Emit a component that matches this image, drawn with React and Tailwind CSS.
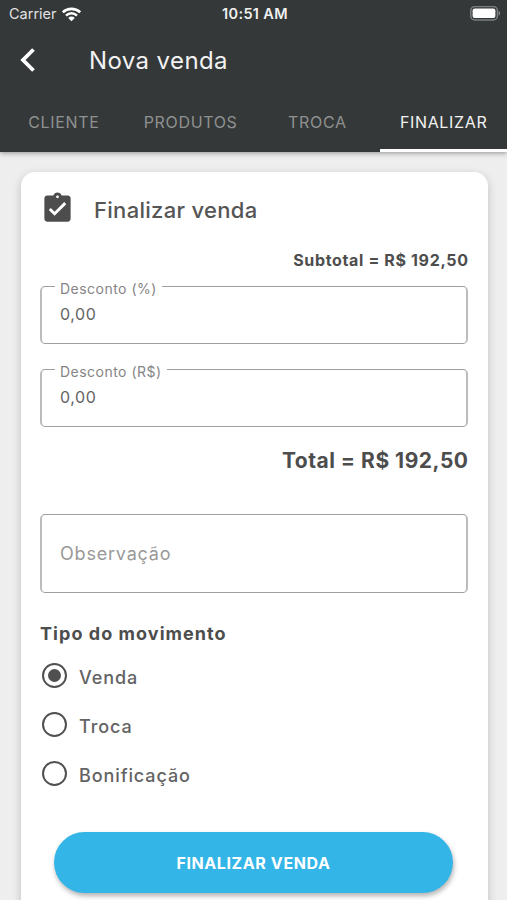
import React from "react";

function Wifi() {
  return (
    <svg width="19" height="15" viewBox="0 0 18 14" fill="none" stroke="#fff" strokeWidth="2.4">
      <path d="M.8 4.9C5.4.6 12.6.6 17.2 4.9" />
      <path d="M3.800 8C6.800 5.200 11.200 5.200 14.200 8" />
      <path d="M9 13.400 5.900 10.200C7.600 8.600 10.400 8.600 12.100 10.200Z" fill="#fff" stroke="none" />
    </svg>
  );
}

function Battery() {
  return (
    <svg width="31" height="15" viewBox="0 0 31 15">
      <rect x=".8" y=".6" width="26.6" height="13.3" rx="4" fill="none" stroke="#7b7e7e" strokeWidth="1.5" />
      <rect x="2.6" y="2.600" width="22.800" height="9.300" rx="2" fill="#fff" />
      <path d="M28.600 5v4.600c1-.4 1.600-1.200 1.600-2.300S29.600 5.400 28.600 5Z" fill="#858787" />
    </svg>
  );
}

function ClipboardCheck() {
  return (
    <svg className="mt-[19px] -ml-[0.5px] shrink-0" width="35" height="35" viewBox="0 0 24 24" fill="#4d4d4d">
      <path d="M19 3h-4.180C14.400 1.840 13.300 1 12 1s-2.400.840-2.820 2H5c-1.100 0-2 .900-2 2v14c0 1.100.900 2 2 2h14c1.100 0 2-.900 2-2V5c0-1.100-.900-2-2-2zm-7 0c.550 0 1 .450 1 1s-.450 1-1 1-1-.450-1-1 .450-1 1-1zm-2 14-4-4 1.410-1.410L10 14.170l6.590-6.590L18 9l-8 8z" />
    </svg>
  );
}

function Field({ label, value }) {
  return (
    <fieldset className="h-[64px] rounded-[5px] border-x-2 border-y border-x-[#bcbcbc] border-y-[#a0a0a0] pl-[18px]">
      <legend className="-ml-[5px] h-[12px] px-[5px] pt-[1px] text-[14px] leading-[15px] tracking-[0.48px] text-[#858585]">{label}</legend>
      <div className="mt-[12px] text-[16px] leading-5 tracking-[0.6px] text-[#636363]">{value}</div>
    </fieldset>
  );
}

function Radio({ label, checked }) {
  return (
    <div className="flex h-[49px] items-center">
      <span className="ml-[2px] flex size-[25px] items-center justify-center rounded-full border-[2.5px] border-[#505050]">
        {checked && <span className="size-[13px] rounded-full bg-[#505050]" />}
      </span>
      <span className="ml-[12px] pt-[4px] text-[18px] leading-6 font-medium tracking-[0.9px] text-[#636363]">{label}</span>
    </div>
  );
}

export default function App() {
  return (
    <div className="flex h-[900px] w-[507px] flex-col overflow-hidden bg-[#eeeeee] font-['Inter','Liberation_Sans',sans-serif] text-[#4d4d4d]">
      <header className="z-10 h-[152px] shrink-0 bg-[#343838] text-white shadow-[0_1px_5px_rgba(0,0,0,0.4)]">
        <div className="grid h-[27px] grid-cols-3 items-center pr-[6px] pl-[9px]">
          <div className="flex items-center gap-[5px] pt-px text-[14.5px] text-[#e0e1e1]">
            <span>Carrier</span>
            <Wifi />
          </div>
          <div className="text-center text-[14.5px] font-semibold tracking-[0.35px] text-[#f0f0f0]">10:51 AM</div>
          <div className="flex justify-end"><Battery /></div>
        </div>
        <div className="flex h-[67px] items-center pl-[20px]">
          <svg className="-mt-[2px]" width="16" height="26" viewBox="0 0 16 26" fill="none" stroke="#fff" strokeWidth="3.8">
            <path d="M13.500 2.500 3 13 13.500 23.500" />
          </svg>
          <h1 className="ml-[53px] text-[24px] tracking-[0.4px] text-[#f2f2f2]">Nova venda</h1>
        </div>
        <nav className="grid h-[58px] grid-cols-4 text-center text-[16px] leading-[53px] tracking-[0.65px] text-[#8f9191]">
          <span className="pt-[2px] pl-px">CLIENTE</span>
          <span className="pt-[2px] pl-px">PRODUTOS</span>
          <span className="pt-[2px] pl-px">TROCA</span>
          <span className="border-b-[3px] border-white pt-[2px] text-[#f2f2f2]">FINALIZAR</span>
        </nav>
      </header>
      <main className="mt-[20px] mr-[19px] ml-[20.5px] h-[760px] shrink-0 rounded-[14px] bg-white pr-[20px] pl-[19.5px] shadow-[0_3px_10px_rgba(0,0,0,0.2)]">
        <div className="flex h-[76px]">
          <ClipboardCheck />
          <h2 className="mt-[22px] ml-[19.5px] text-[22px] leading-8 font-medium tracking-[0.3px] text-[#555]">Finalizar venda</h2>
        </div>
        <p className="-mr-[0.6px] text-right text-[16px] leading-6 font-bold tracking-[0.65px]">Subtotal = R$ 192,50</p>
        <div className="mt-[8px] flex flex-col gap-[19px]">
          <Field label="Desconto (%)" value="0,00" />
          <Field label="Desconto (R$)" value="0,00" />
        </div>
        <p className="mt-[18px] -mr-[0.5px] text-right text-[21px] leading-8 font-bold tracking-[0.5px]">Total = R$ 192,50</p>
        <div className="mt-[37px] flex h-[79px] items-center rounded-[5px] border-x-2 border-y border-x-[#bcbcbc] border-y-[#a0a0a0] pl-[18px] text-[18px] tracking-[0.8px] text-[#999]">Observação</div>
        <h3 className="mt-[27px] text-[18px] leading-7 font-bold tracking-[1.05px]">Tipo do movimento</h3>
        <div className="mt-[3px]">
          <Radio label="Venda" checked />
          <Radio label="Troca" />
          <Radio label="Bonificação" />
        </div>
        <button className="mt-[34px] ml-[14px] h-[61px] w-[399px] rounded-full bg-[#33b5e7] text-[16px] font-bold tracking-[0.6px] text-white shadow-[1px_3px_5px_rgba(0,0,0,0.3)]">FINALIZAR VENDA</button>
      </main>
    </div>
  );
}
